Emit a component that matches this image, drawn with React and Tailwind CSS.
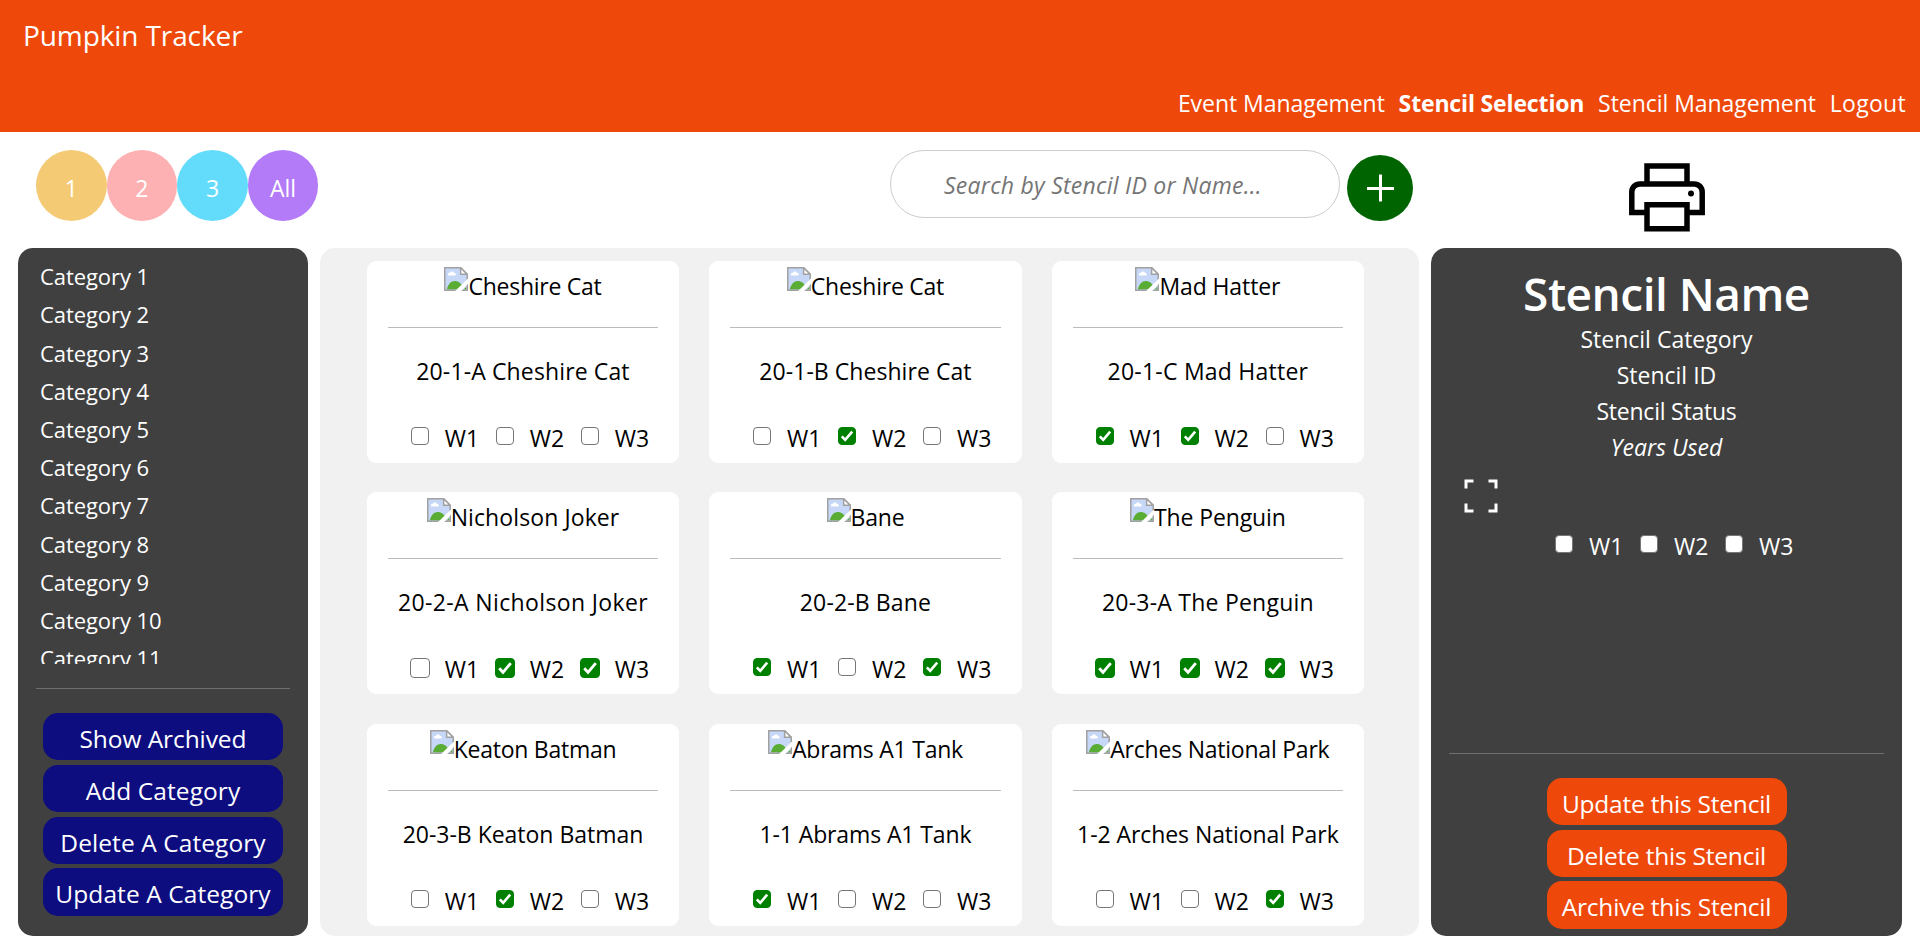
const categories = Array.from({ length: 11 }, (_, i) => `Category ${i + 1}`);

const rows = [
  [
    { id: "20-1-A", name: "Cheshire Cat", weeks: [false, false, false], nameFit: "-tracking-[0.250px]", titleFit: "tracking-[0.130px]" },
    { id: "20-1-B", name: "Cheshire Cat", weeks: [false, true, false], nameFit: "-tracking-[0.250px]", titleFit: "tracking-[0.050px]" },
    { id: "20-1-C", name: "Mad Hatter", weeks: [true, true, false], nameFit: "-tracking-[0.100px]", titleFit: "tracking-[0.230px]" },
  ],
  [
    { id: "20-2-A", name: "Nicholson Joker", weeks: [false, true, true], nameFit: "tracking-[0.100px]", titleFit: "tracking-[0.370px]", large: true },
    { id: "20-2-B", name: "Bane", weeks: [true, false, true], nameFit: "-tracking-[0.200px]", titleFit: "tracking-[0.130px]" },
    { id: "20-3-A", name: "The Penguin", weeks: [true, true, true], nameFit: "-tracking-[0.100px]", titleFit: "tracking-[0.230px]", large: true },
  ],
  [
    { id: "20-3-B", name: "Keaton Batman", weeks: [false, true, false], nameFit: "-tracking-[0.250px]", titleFit: "-tracking-[0.020px]" },
    { id: "1-1", name: "Abrams A1 Tank", weeks: [true, false, false], nameFit: "-tracking-[0.250px]", titleFit: "-tracking-[0.120px]" },
    { id: "1-2", name: "Arches National Park", weeks: [false, false, true], nameFit: "-tracking-[0.220px]", titleFit: "-tracking-[0.070px]" },
  ],
];

const filters = [
  { label: "1", color: "bg-[#f4ca74]" },
  { label: "2", color: "bg-[#fdb1b3]" },
  { label: "3", color: "bg-[#63dcfb]" },
  { label: "All", color: "bg-[#b37bf7]" },
];

function MissingImage() {
  return (
    <svg viewBox="0 0 16 16" className="size-6 shrink-0">
      <path d="M.5.5h10.600l4.400 4.400v10.600H.5z" fill="#c6d7f7" />
      <path d="M2.800 5.700c-.6-1.100.2-2 1.200-1.800.4-1.200 2.200-1.300 2.600-.1 1.100 0 1.500 1 1.100 1.900z" fill="#fff" />
      <path d="M1.800 15c.9-3.500 2.900-5.700 5.400-5.700 2.300 0 4.300 1.500 5.300 4L11 15z" fill="#59ad35" />
      <path d="M13 15l2-1.800V15z" fill="#59ad35" />
      <path d="M.5 16V.5h10.600l4.400 4.400V16M0 15.500h16" fill="none" stroke="#a1a1a1" />
      <path d="M11.100.5v4.400h4.400z" fill="#fff" stroke="#a1a1a1" />
      <path d="M16 7.600v3.600L11.500 16H7.400z" fill="#fff" />
    </svg>
  );
}

function PrinterIcon() {
  return (
    <svg viewBox="0 0 76 69" className="h-[69px] w-[76px]" fill="none" stroke="#000" strokeWidth="5.500">
      <path d="M18 20V3h40v17" />
      <path d="M18 49.500H2.800V29c0-4.500 3.500-8 8-8h54.400c4.500 0 8 3.500 8 8v20.500H58" />
      <path d="M18 41.800h40v24H18z" />
      <circle cx="62" cy="30.500" r="3" fill="#000" stroke="none" />
    </svg>
  );
}

function Week({ n, checked, large }) {
  return (
    <label className="flex w-[85px] shrink-0 items-start">
      <span className={large ? "relative mt-[6.500px] size-5 shrink-0" : "relative mx-px mt-[7px] size-[18px] shrink-0"}>
        <input
          type="checkbox"
          defaultChecked={checked}
          className="block size-full appearance-none rounded-[4px] border border-[#767676] bg-white checked:border-[#008000] checked:bg-[#008000]"
        />
        {checked && (
          <svg viewBox="0 0 18 18" className="absolute inset-0 size-full" fill="none" stroke="#fff" strokeWidth="2.600">
            <path d="M3.800 9.300l3.400 3.600 7-8.300" />
          </svg>
        )}
      </span>
      <span className="ml-[15px] leading-9">W{n}</span>
    </label>
  );
}

function Card({ card }) {
  return (
    <div className="flex h-[201.600px] flex-col rounded-[9px] bg-white pt-[5.600px]">
      <div className="flex h-[60.100px] items-start justify-center">
        <MissingImage />
        <span className={`mt-[1px] leading-9 ${card.nameFit}`}>{card.name}</span>
      </div>
      <div className="mx-[21px] h-px bg-[#bbbbbb]" />
      <div className={`mt-[25.200px] text-center leading-9 ${card.titleFit}`}>
        {card.id} {card.name}
      </div>
      <div className="mt-[31px] flex pl-[42.700px]">
        {card.weeks.map((checked, i) => (
          <Week key={i} n={i + 1} checked={checked} large={card.large} />
        ))}
      </div>
    </div>
  );
}

function PanelButton({ children, className }) {
  return (
    <button className={`block h-[47.200px] w-60 rounded-[15px] pt-1 text-center text-[24.5px] leading-[43px] text-white ${className}`}>
      {children}
    </button>
  );
}

export default function App() {
  return (
    <div className="h-[946px] overflow-hidden bg-white font-['Open_Sans','Noto_Sans',sans-serif] text-[23px] text-black">
      <header className="flex h-[132px] flex-col justify-between bg-[#ee480b] text-white">
        <div className="pt-[15px] pl-[23px] text-[28px] leading-10 -tracking-[0.100px]">Pumpkin Tracker</div>
        <nav className="flex justify-end gap-[13.800px] pr-[14px] pb-[11px] leading-9">
          <a className="-tracking-[0.050px]">Event Management</a>
          <a className="font-bold -tracking-[0.150px]">Stencil Selection</a>
          <a className="-tracking-[0.050px]">Stencil Management</a>
          <a className="tracking-[0.300px]">Logout</a>
        </nav>
      </header>

      <div className="flex h-[116px] items-start">
        <div className="flex w-[890px] pt-[18px] pl-9 text-white">
          {filters.map((f) => (
            <button key={f.label} className={`h-[71px] w-[70.600px] rounded-full pt-[5px] leading-9 ${f.color}`}>
              {f.label}
            </button>
          ))}
        </div>
        <input
          placeholder="Search by Stencil ID or Name..."
          className="mt-[18px] h-[68px] w-[450px] rounded-full border border-[#cccccc] pt-[2px] pl-[53px] tracking-[0.250px] italic placeholder:text-[#757575]"
        />
        <button className="mt-[23px] ml-[7px] flex size-[66px] items-center justify-center rounded-full bg-[#006400]">
          <svg viewBox="0 0 28 28" className="size-7" stroke="#fff" strokeWidth="3">
            <path d="M14.500 0.500v27M1 14.500h27" />
          </svg>
        </button>
        <div className="ml-[18px] flex w-[471px] justify-center pt-[31px]">
          <PrinterIcon />
        </div>
      </div>

      <main className="flex h-[688px] gap-3 pl-[18px]">
        <aside className="flex w-[290px] flex-col rounded-[15px] bg-[#404040] text-white">
          <ul className="h-[415.700px] overflow-hidden pt-[9.200px] pl-[22px] text-[22px] -tracking-[0.080px]">
            {categories.map((c) => (
              <li key={c} className="leading-[38.200px]">{c}</li>
            ))}
          </ul>
          <div className="mx-[18px] mt-[24.300px] h-px shrink-0 bg-[#6f6f6f]" />
          <div className="mt-6 flex flex-col items-center gap-[4.600px]">
            <PanelButton className="bg-[#0d0d7f] -tracking-[0.080px]">Show Archived</PanelButton>
            <PanelButton className="bg-[#0d0d7f] tracking-[0.080px]">Add Category</PanelButton>
            <PanelButton className="bg-[#0d0d7f] tracking-[0.080px]">Delete A Category</PanelButton>
            <PanelButton className="bg-[#0d0d7f] tracking-[0.080px]">Update A Category</PanelButton>
          </div>
        </aside>

        <section className="flex w-[1099px] flex-col gap-[29.900px] rounded-[15px] bg-[#f1f1f1] pt-[13px] pl-[47px]">
          {rows.map((cards, r) => (
            <div key={r} className="grid grid-cols-[312px_312.500px_312px] gap-x-[30.200px]">
              {cards.map((card) => (
                <Card key={card.id} card={card} />
              ))}
            </div>
          ))}
        </section>

        <aside className="flex w-[471px] flex-col rounded-[15px] bg-[#404040] text-center text-white">
          <h1 className="mt-[12px] text-[46px] leading-[66px] font-semibold -tracking-[0.500px]">Stencil Name</h1>
          <p className="-mt-[5px] leading-9">Stencil Category</p>
          <p className="leading-9">Stencil ID</p>
          <p className="leading-9 -tracking-[0.220px]">Stencil Status</p>
          <p className="leading-9 italic">Years Used</p>
          <svg viewBox="0 0 34 34" className="mt-[14px] ml-[33px] size-[34px]" fill="none" stroke="#fff" strokeWidth="3">
            <path d="M9.500 2H2v7.500M24.500 2H32v7.500M9.500 32H2v-7.500M24.500 32H32v-7.500" />
          </svg>
          <div className="mt-[15px] flex pl-[123px]">
            {[1, 2, 3].map((n) => (
              <Week key={n} n={n} checked={false} />
            ))}
          </div>
          <div className="mx-[18px] mt-auto h-px bg-[#6f6f6f]" />
          <div className="mt-6 mb-[7.500px] flex flex-col items-center gap-[4.600px]">
            <PanelButton className="bg-[#ee480b] -tracking-[0.220px]">Update this Stencil</PanelButton>
            <PanelButton className="bg-[#ee480b] -tracking-[0.220px]">Delete this Stencil</PanelButton>
            <PanelButton className="bg-[#ee480b] -tracking-[0.220px]">Archive this Stencil</PanelButton>
          </div>
        </aside>
      </main>
    </div>
  );
}
